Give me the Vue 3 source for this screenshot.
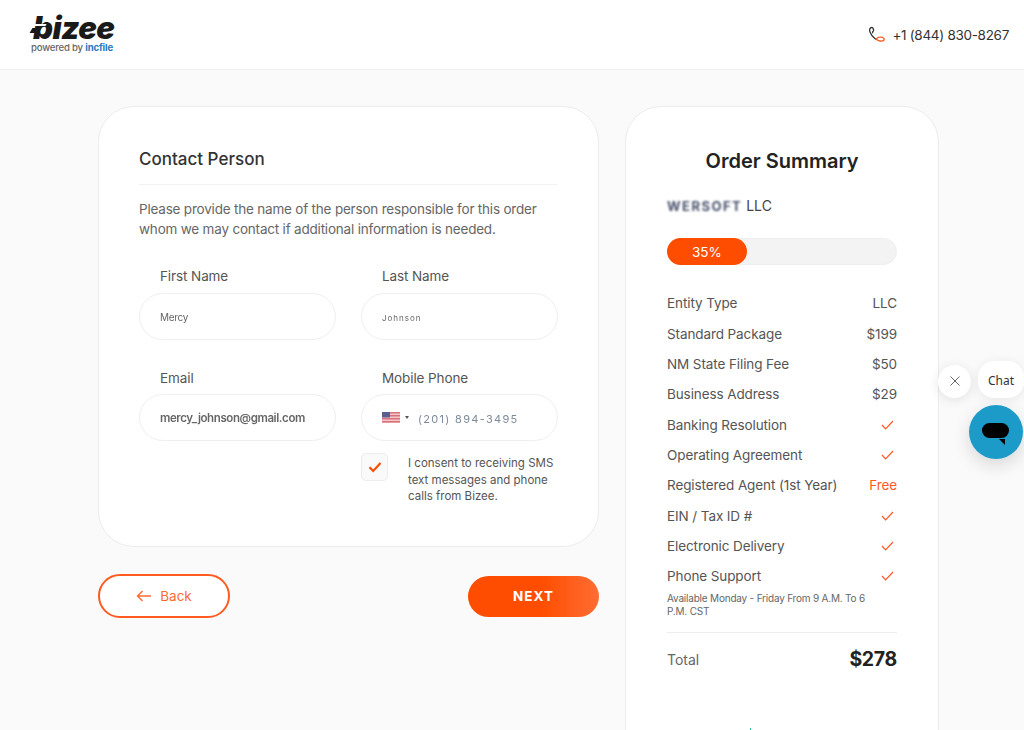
<template>
  <div class="page">
    <header class="topbar">
      <div class="logo">
        <div class="logo-mark">
          <span class="logo-word">bizee</span>
          <span class="logo-cut"></span>
          <span class="logo-bar"></span>
        </div>
        <div class="logo-sub">powered by <span class="logo-inc">incfile</span></div>
      </div>
      <div class="phone">
        <svg width="18" height="18" viewBox="0 0 18 18" fill="none">
          <path d="M3.2 1.6C1.6 2.2 1.2 4 2 6c1 2.6 2.8 5 4.8 6.6 0.6 0.5 1.2 0.6 1.6 0.2" stroke="#333" stroke-width="1.3" stroke-linecap="round" />
          <path d="M3.2 1.6c0.9-0.4 1.6 0 1.9 0.8l0.5 1.4c0.2 0.7 0 1.2-0.6 1.6-0.5 0.3-0.6 0.7-0.3 1.3" stroke="#333" stroke-width="1.3" stroke-linecap="round" />
          <path d="M8.4 12.8c1-1.2 2.6-1.8 4.6-1.6 2 0.2 3.4 1 3.2 2.2-0.2 1.2-2 1.8-4 1.6-2-0.2-3.4-1-3.8-2.2z" stroke="#ff5a1f" stroke-width="1.3" />
        </svg>
        <span>+1 (844) 830-8267</span>
      </div>
    </header>

    <main class="content">
      <section class="left">
        <div class="card form-card">
          <h2 class="form-title">Contact Person</h2>
          <p class="form-desc">Please provide the name of the person responsible for this order whom we may contact if additional information is needed.</p>
          <div class="fields">
            <div class="field">
              <label>First Name</label>
              <div class="input"><span class="fuzzy">Mercy</span></div>
            </div>
            <div class="field">
              <label>Last Name</label>
              <div class="input"><span class="fuzzy fuzzy-low">Johnson</span></div>
            </div>
            <div class="field">
              <label>Email</label>
              <div class="input"><span class="fuzzy fuzzy-mail">mercy_johnson@gmail.com</span></div>
            </div>
            <div class="field">
              <label>Mobile Phone</label>
              <div class="input input-phone">
                <svg class="flag" width="18" height="11" viewBox="0 0 18 11">
                  <rect width="18" height="11" fill="#f3c6c8" />
                  <rect y="0" width="18" height="1.5" fill="#d9717c" />
                  <rect y="3" width="18" height="1.5" fill="#d9717c" />
                  <rect y="6" width="18" height="1.5" fill="#d9717c" />
                  <rect y="9" width="18" height="1.5" fill="#d9717c" />
                  <rect width="8" height="5.5" fill="#5b5f8c" />
                </svg>
                <span class="caret"></span>
                <span class="fuzzy fuzzy-phone">(201) 894-3495</span>
              </div>
              <div class="consent">
                <span class="checkbox">
                  <svg width="14" height="12" viewBox="0 0 14 12" fill="none">
                    <path d="M1.5 6.2L5.2 10 12.5 2" stroke="#ff4d00" stroke-width="2.2" />
                  </svg>
                </span>
                <span class="consent-text">I consent to receiving SMS text messages and phone calls from Bizee.</span>
              </div>
            </div>
          </div>
        </div>
        <div class="actions">
          <button class="btn-back">
            <svg width="16" height="12" viewBox="0 0 16 12" fill="none">
              <path d="M15 6H1.5M6.5 1L1.5 6l5 5" stroke="#ff6a33" stroke-width="1.4" />
            </svg>
            Back
          </button>
          <button class="btn-next">NEXT</button>
        </div>
      </section>

      <aside class="card summary">
        <h2 class="summary-title">Order Summary</h2>
        <div class="company"><span class="fuzzy fuzzy-co">WERSOFT</span> LLC</div>
        <div class="progress">
          <div class="progress-fill" :style="{ width: progress + '%' }">{{ progress }}%</div>
        </div>
        <div class="rows">
          <div v-for="row in rows" :key="row.label" class="row">
            <span>{{ row.label }}</span>
            <svg v-if="row.check" width="13" height="10" viewBox="0 0 13 10" fill="none">
              <path d="M1 5l3.6 3.8L12 1" stroke="#ff5a26" stroke-width="1.2" />
            </svg>
            <span v-else :class="{ free: row.value === 'Free' }">{{ row.value }}</span>
          </div>
        </div>
        <p class="hours">Available Monday - Friday From 9 A.M. To 6 P.M. CST</p>
        <div class="total">
          <span>Total</span>
          <strong>$278</strong>
        </div>
        <span class="seal-tip"></span>
      </aside>
    </main>

    <div class="chat">
      <div class="chat-top">
        <span class="chat-close">
          <svg width="10" height="10" viewBox="0 0 10 10" fill="none">
            <path d="M0.5 0.5l9 9M9.5 0.5l-9 9" stroke="#666" stroke-width="1" />
          </svg>
        </span>
        <span class="chat-label">Chat</span>
      </div>
      <div class="chat-bubble">
        <svg width="28" height="24" viewBox="0 0 28 24">
          <rect x="0" y="0" width="27" height="15" rx="7.5" fill="#000" />
          <path d="M17 16h6v6z" fill="#000" />
        </svg>
      </div>
    </div>
  </div>
</template>

<script setup>
const progress = 35

const rows = [
  { label: 'Entity Type', value: 'LLC' },
  { label: 'Standard Package', value: '$199' },
  { label: 'NM State Filing Fee', value: '$50' },
  { label: 'Business Address', value: '$29' },
  { label: 'Banking Resolution', check: true },
  { label: 'Operating Agreement', check: true },
  { label: 'Registered Agent (1st Year)', value: 'Free' },
  { label: 'EIN / Tax ID #', check: true },
  { label: 'Electronic Delivery', check: true },
  { label: 'Phone Support', check: true },
]
</script>

<style>
html,
body {
  margin: 0;
  background: #fafafa;
  overflow: hidden;
}
</style>

<style scoped>
.page {
  position: relative;
  width: 1024px;
  height: 730px;
  overflow: hidden;
  background: #fafafa;
  font-family: Inter, "Noto Sans", sans-serif;
  color: #555;
}

.topbar {
  height: 69px;
  background: #fff;
  border-bottom: 1px solid #f1f1f1;
  display: flex;
  align-items: center;
  justify-content: space-between;
  padding: 0 15px 0 31px;
}

.logo {
  display: flex;
  flex-direction: column;
  margin-top: -2px;
}

.logo-mark {
  position: relative;
  height: 29px;
}

.logo-word {
  display: block;
  padding-left: 2px;
  font-size: 31px;
  line-height: 29px;
  font-weight: 900;
  font-style: italic;
  letter-spacing: -0.5px;
  color: #1a1a1a;
}

.logo-cut {
  position: absolute;
  left: 2px;
  top: 11px;
  width: 13px;
  height: 2px;
  background: #fff;
  transform: skewX(-30deg);
}

.logo-bar {
  position: absolute;
  left: 0;
  top: 15px;
  width: 9px;
  height: 5px;
  background: #1a1a1a;
  transform: skewX(-30deg);
}

.logo-sub {
  font-size: 9.6px;
  line-height: 12px;
  font-weight: 500;
  letter-spacing: -0.2px;
  color: #666;
}

.logo-inc {
  font-weight: 700;
  color: #2a78bd;
}

.phone {
  display: flex;
  align-items: center;
  gap: 6px;
  font-size: 13.5px;
  letter-spacing: -0.3px;
  color: #333;
}

.content {
  display: flex;
  align-items: flex-start;
  gap: 26px;
  padding: 36px 0 0 98px;
}

.left {
  width: 501px;
}

.card {
  box-sizing: border-box;
  background: #fff;
  border: 1px solid #ececec;
  border-radius: 36px;
}

.form-card {
  height: 441px;
  padding: 42px 40px 0;
}

.form-title {
  margin: 0;
  padding-bottom: 14px;
  border-bottom: 1px solid #f2f2f2;
  font-size: 17px;
  line-height: 21px;
  font-weight: 500;
  color: #333;
}

.form-desc {
  margin: 14px 0 0;
  font-size: 13.5px;
  line-height: 20px;
  letter-spacing: -0.2px;
  color: #666;
}

.fields {
  display: grid;
  grid-template-columns: 197px 197px;
  column-gap: 25px;
  row-gap: 29px;
  margin-top: 29px;
}

.field label {
  display: block;
  padding-left: 21px;
  font-size: 13.5px;
  line-height: 17px;
  letter-spacing: -0.1px;
  color: #555;
}

.input {
  box-sizing: border-box;
  height: 47px;
  margin-top: 8px;
  padding: 0 20px;
  display: flex;
  align-items: center;
  background: #fff;
  border: 1px solid #efefef;
  border-radius: 24px;
}

.field:nth-child(n + 3) label {
  margin-top: 1px;
}

.field:nth-child(n + 3) .input {
  margin-top: 7px;
}

.input-phone {
  padding-right: 10px;
}

.fuzzy {
  display: inline-block;
  font-size: 10px;
  line-height: 12px;
  letter-spacing: -0.3px;
  color: #666;
  filter: blur(0.7px);
}

.fuzzy-low {
  font-size: 8px;
  margin-top: 3px;
  letter-spacing: 1px;
}

.fuzzy-mail {
  font-size: 11.5px;
  letter-spacing: -0.4px;
  font-weight: 600;
}

.fuzzy-phone {
  font-size: 11px;
  letter-spacing: 1.3px;
  color: #7d8a9a;
  margin-left: 9px;
  margin-top: 3px;
}

.fuzzy-co {
  font-size: 13px;
  font-weight: 700;
  letter-spacing: 1.5px;
  color: #47506a;
  filter: blur(0.9px);
}

.flag {
  flex: none;
}

.caret {
  flex: none;
  margin-left: 5px;
  width: 0;
  height: 0;
  border-left: 2.5px solid transparent;
  border-right: 2.5px solid transparent;
  border-top: 3px solid #555;
}

.consent {
  display: flex;
  align-items: flex-start;
  gap: 20px;
  margin-top: 12px;
}

.checkbox {
  box-sizing: border-box;
  flex: none;
  width: 27px;
  height: 28px;
  display: flex;
  align-items: center;
  justify-content: center;
  background: #fafafa;
  border: 1px solid #ececec;
  border-radius: 5px;
}

.consent-text {
  width: 152px;
  margin-top: 2px;
  font-size: 11.5px;
  line-height: 16.5px;
  color: #555;
}

.actions {
  display: flex;
  align-items: center;
  justify-content: space-between;
  margin-top: 27px;
}

.btn-back,
.btn-next {
  font-family: inherit;
  cursor: pointer;
  border-radius: 22px;
}

.btn-back {
  box-sizing: border-box;
  width: 132px;
  height: 44px;
  display: flex;
  align-items: center;
  justify-content: center;
  gap: 8px;
  background: #fff;
  border: 2px solid #ff5a1f;
  font-size: 13.5px;
  color: #ff6a33;
}

.btn-next {
  width: 131px;
  height: 41px;
  border: 0;
  background: linear-gradient(90deg, #ff4d00 55%, #ff6d33 100%);
  font-size: 13.5px;
  font-weight: 700;
  letter-spacing: 1px;
  color: #fff;
}

.summary {
  position: relative;
  width: 314px;
  height: 660px;
  padding: 41px 41px 0;
}

.summary-title {
  margin: 0;
  text-align: center;
  font-size: 20px;
  line-height: 26px;
  font-weight: 600;
  color: #222;
}

.company {
  margin-top: 22px;
  font-size: 14px;
  line-height: 20px;
  color: #444;
}

.progress {
  height: 27px;
  margin-top: 22px;
  background: #f3f3f3;
  border: 1px solid #efefef;
  box-sizing: border-box;
  border-radius: 14px;
}

.progress-fill {
  height: 27px;
  margin: -1px 0 0 -1px;
  display: flex;
  align-items: center;
  justify-content: center;
  background: #ff4d00;
  border-radius: 14px;
  font-size: 13.5px;
  color: #fff;
}

.rows {
  margin-top: 23px;
}

.row {
  height: 30.35px;
  display: flex;
  align-items: center;
  justify-content: space-between;
  font-size: 13.5px;
  letter-spacing: -0.1px;
  color: #555;
}

.row svg {
  margin-right: 3px;
}

.free {
  color: #ff5a26;
}

.hours {
  margin: 1px 0 0;
  padding: 0 30px 14px 0;
  border-bottom: 1px solid #eee;
  font-size: 10px;
  line-height: 13px;
  letter-spacing: -0.2px;
  color: #666;
}

.total {
  display: flex;
  align-items: center;
  justify-content: space-between;
  margin-top: 10px;
  font-size: 14px;
  color: #666;
}

.total strong {
  font-size: 19.5px;
  line-height: 32px;
  font-weight: 700;
  letter-spacing: -0.3px;
  color: #222;
}

.seal-tip {
  position: absolute;
  left: 124px;
  top: 621px;
  width: 1px;
  height: 3px;
  background: #2fbf8f;
}

.chat {
  position: absolute;
  right: 0;
  top: 361px;
  width: 87px;
  display: flex;
  flex-direction: column;
  align-items: flex-end;
  gap: 7px;
}

.chat-top {
  display: flex;
  align-items: center;
  gap: 7px;
}

.chat-close {
  width: 33px;
  height: 33px;
  margin-top: 3px;
  display: flex;
  align-items: center;
  justify-content: center;
  background: #fff;
  border-radius: 50%;
  box-shadow: 0 2px 12px rgba(0, 0, 0, 0.1);
}

.chat-label {
  width: 46px;
  height: 37px;
  padding-top: 1px;
  box-sizing: border-box;
  display: flex;
  align-items: center;
  justify-content: center;
  background: #fff;
  border-radius: 16px;
  box-shadow: 0 2px 12px rgba(0, 0, 0, 0.08);
  font-family: "Noto Sans", sans-serif;
  font-size: 12px;
  color: #333;
}

.chat-bubble {
  width: 54px;
  height: 54px;
  margin-right: 1px;
  display: flex;
  align-items: center;
  justify-content: center;
  padding-top: 6px;
  box-sizing: border-box;
  background: #1c9bc9;
  border-radius: 50%;
  box-shadow: 0 6px 18px rgba(0, 0, 0, 0.14);
}
</style>
